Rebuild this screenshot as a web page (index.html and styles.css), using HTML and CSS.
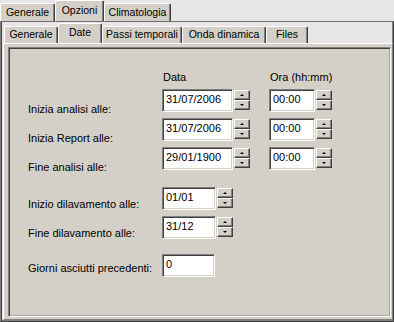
FILE: index.html
```html
<!DOCTYPE html>
<html lang="it">
  <head>
    <meta charset="UTF-8" />
    <title>Opzioni - Date</title>
    <link rel="stylesheet" href="styles.css">
  </head>
  <body>
    <div class="tabs outer">
      <div class="tab t-gen">Generale</div>
      <div class="tab t-opz active">Opzioni</div>
      <div class="tab t-clim">Climatologia</div>
    </div>

    <div class="sheet">
      <div class="tabs inner">
        <div class="tab t-gen2">Generale</div>
        <div class="tab t-date active">Date</div>
        <div class="tab t-passi">Passi temporali</div>
        <div class="tab t-onda">Onda dinamica</div>
        <div class="tab t-files">Files</div>
      </div>

      <div class="page">
        <div class="group">
          <div class="head-row">
            <span class="col-date">Data</span>
            <span>Ora (hh:mm)</span>
          </div>

          <div class="row first">
            <span class="label">Inizia analisi alle:</span>
            <div class="spin">
              <div class="edit date">31/07/2006</div>
              <div class="btns"><span class="btn up"></span><span class="btn down"></span></div>
            </div>
            <div class="spin time-col">
              <div class="edit time">00:00</div>
              <div class="btns"><span class="btn up"></span><span class="btn down"></span></div>
            </div>
          </div>

          <div class="row">
            <span class="label">Inizia Report alle:</span>
            <div class="spin">
              <div class="edit date">31/07/2006</div>
              <div class="btns"><span class="btn up"></span><span class="btn down"></span></div>
            </div>
            <div class="spin time-col">
              <div class="edit time">00:00</div>
              <div class="btns"><span class="btn up"></span><span class="btn down"></span></div>
            </div>
          </div>

          <div class="row">
            <span class="label">Fine analisi alle:</span>
            <div class="spin">
              <div class="edit date">29/01/1900</div>
              <div class="btns"><span class="btn up"></span><span class="btn down"></span></div>
            </div>
            <div class="spin time-col">
              <div class="edit time">00:00</div>
              <div class="btns"><span class="btn up"></span><span class="btn down"></span></div>
            </div>
          </div>

          <div class="row dil section">
            <span class="label">Inizio dilavamento alle:</span>
            <div class="spin">
              <div class="edit short">01/01</div>
              <div class="btns"><span class="btn up"></span><span class="btn down"></span></div>
            </div>
          </div>

          <div class="row dil">
            <span class="label">Fine dilavamento alle:</span>
            <div class="spin">
              <div class="edit short">31/12</div>
              <div class="btns"><span class="btn up"></span><span class="btn down"></span></div>
            </div>
          </div>

          <div class="row days section">
            <span class="label">Giorni asciutti precedenti:</span>
            <div class="edit days-edit">0</div>
          </div>
        </div>
      </div>
    </div>
  </body>
</html>
```

FILE: styles.css
```css
body {
  margin: 0;
  width: 394px;
  height: 322px;
  overflow: hidden;
  background-color: #e6e6e6;
  font-family: "Liberation Sans", Arial, sans-serif;
  font-size: 11px;
  color: #000;
}

/* tab strips */
.tabs {
  display: flex;
  align-items: flex-end;
}
.tabs.outer {
  height: 21px;
}
.tabs.inner {
  height: 21px;
  padding-left: 3px;
}
.tab {
  box-sizing: border-box;
  background-color: #d4d0c8;
  border-top: 1px solid #fff;
  border-left: 1px solid #fff;
  border-right: 1px solid #404040;
  box-shadow: inset -1px 0 #808080;
  border-radius: 2px 2px 0 0;
  text-align: center;
  white-space: nowrap;
  font-size: 10.5px;
}
.outer .tab {
  height: 18px;
  line-height: 16px;
}
.outer .tab.active {
  height: 21px;
  line-height: 18px;
}
.inner .tab {
  height: 17px;
  line-height: 14px;
}
.inner .tab.active {
  height: 20px;
  line-height: 17px;
}
.t-gen { width: 55px; }
.t-opz { width: 49px; }
.t-clim { width: 67px; }
.t-gen2 { width: 54px; }
.t-date { width: 44px; }
.t-passi { width: 80px; }
.t-onda { width: 84px; }
.t-files { width: 42px; }

/* outer sheet and page */
.sheet {
  box-sizing: border-box;
  height: 301px;
  border: 1px solid #404040;
  border-top-color: #6f6f6f;
  border-left-color: #808080;
  box-shadow: inset 1px 0 #404040, inset -1px -1px #808080;
  display: flex;
  flex-direction: column;
}
.page {
  flex: 1;
  display: flex;
  margin: 0 0 1px 2px;
  padding: 3px 1px 2px 4px;
  background-color: #d4d0c8;
  border-top: 1px solid #fff;
  border-left: 1px solid #fff;
  border-right: 1px solid #808080;
  border-bottom: 1px solid #808080;
}
.group {
  flex: 1;
  padding-left: 19px;
  border: 1px solid;
  border-color: #808080 #fff #fff #808080;
  box-shadow: inset 1px 1px #404040, inset -1px -1px #a8a59e;
}

/* form rows */
.head-row {
  display: flex;
  margin-top: 23px;
  padding-left: 135px;
  line-height: 12px;
}
.col-date {
  width: 107px;
}
.row {
  display: flex;
  height: 23px;
  margin-top: 6px;
}
.row.first {
  margin-top: 6px;
}
.row.section {
  margin-top: 17px;
}
.row.days {
  margin-top: 15px;
}
.label {
  width: 134px;
  padding-top: 14px;
  line-height: 13px;
  white-space: nowrap;
}
.row.dil .label {
  padding-top: 11px;
}
.row.days .label {
  padding-top: 8px;
}

/* edit boxes and spinners */
.spin {
  display: flex;
}
.time-col {
  margin-left: 19px;
}
.edit {
  box-sizing: border-box;
  height: 23px;
  line-height: 19px;
  padding-left: 3px;
  background-color: #fff;
  border: 1px solid;
  border-color: #808080 #fff #fff #808080;
  box-shadow: inset 1px 1px #404040, inset -1px -1px #d4d0c8;
  white-space: nowrap;
}
.edit.date { width: 71px; }
.edit.time { width: 46px; }
.edit.short { width: 54px; }
.edit.days-edit { width: 53px; }
.btns {
  display: flex;
  flex-direction: column;
  width: 16px;
  margin: 1px 0 0 1px;
}
.btn {
  box-sizing: border-box;
  height: 10px;
  display: flex;
  align-items: center;
  justify-content: center;
  background-color: #d4d0c8;
  border: 1px solid;
  border-color: #fff #404040 #404040 #fff;
  box-shadow: inset -1px -1px #808080;
}
.btn:before {
  content: "";
  width: 0;
  height: 0;
  border-left: 2px solid transparent;
  border-right: 2px solid transparent;
}
.btn.up:before {
  border-bottom: 2px solid #000;
}
.btn.down:before {
  border-top: 2px solid #000;
}
```
